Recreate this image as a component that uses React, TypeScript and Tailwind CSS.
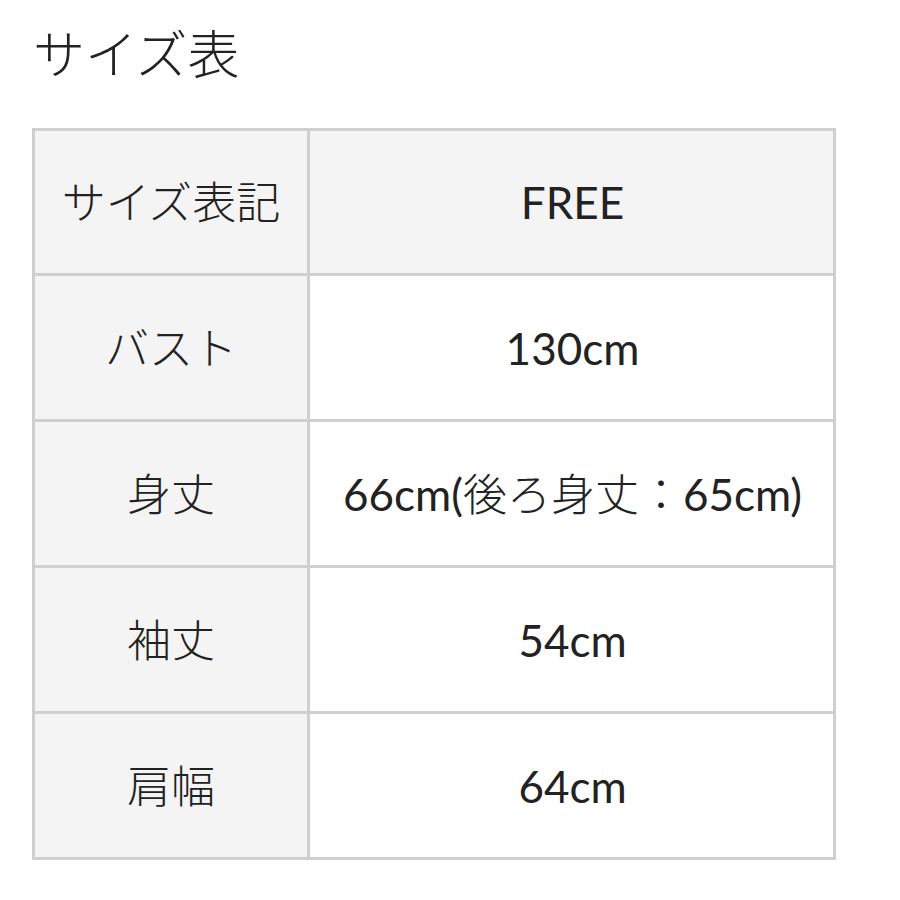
const rows = [
  { label: 'バスト', value: '130cm' },
  { label: '身丈', value: '66cm(後ろ身丈：65cm)' },
  { label: '袖丈', value: '54cm' },
  { label: '肩幅', value: '64cm' },
];

// split text so the Japanese runs get the lighter weight
function Mixed({ text }: { text: string }) {
  const parts = text.match(/[\u3000-\u9fff\uff00-\uffef]+|[^\u3000-\u9fff\uff00-\uffef]+/g) ?? [];
  return (
    <>
      {parts.map((p, i) =>
        /[\u3000-\u9fff\uff00-\uffef]/.test(p) ? (
          <span key={i} className="font-light">{p}</span>
        ) : (
          <span key={i}>{p}</span>
        )
      )}
    </>
  );
}

export default function App() {
  return (
    <div
      className="w-[900px] h-[900px] bg-white text-[#222] px-[32px] pt-[23px]"
      style={{ fontFamily: "Lato, 'Noto Sans CJK JP', sans-serif" }}
    >
      <h1 className="text-[52px] leading-[62px] pl-[1px] h-[105px] font-light">サイズ表</h1>
      <div className="w-[804px] grid grid-cols-[272px_1fr] gap-[3px] p-[3px] bg-[#cfcfcf] text-[44px]">
        <div className="h-[142px] bg-[#f4f4f4] flex items-center justify-center">
          <Mixed text="サイズ表記" />
        </div>
        <div className="h-[142px] bg-[#f4f4f4] flex items-center justify-center pl-[2px]">FREE</div>
        {rows.map((row) => (
          <>
            <div key={row.label} className="h-[143px] bg-[#f4f4f4] flex items-center justify-center">
              <Mixed text={row.label} />
            </div>
            <div key={row.value} className="h-[143px] bg-white flex items-center justify-center pl-[2px]">
              <Mixed text={row.value} />
            </div>
          </>
        ))}
      </div>
    </div>
  );
}
